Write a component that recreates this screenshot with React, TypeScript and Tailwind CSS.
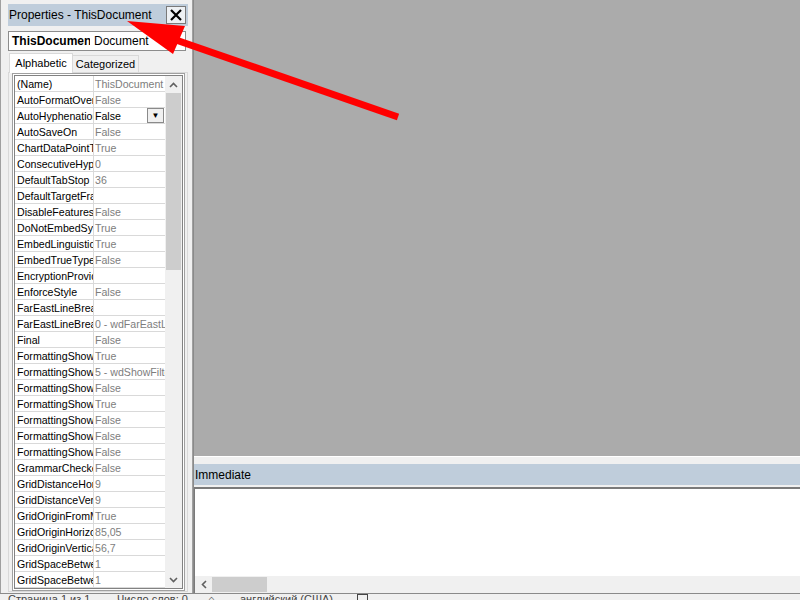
import React from 'react'

const rows: [string, string][] = [
  ['(Name)', 'ThisDocument'],
  ['AutoFormatOverride', 'False'],
  ['AutoHyphenation', 'False'],
  ['AutoSaveOn', 'False'],
  ['ChartDataPointTrack', 'True'],
  ['ConsecutiveHyphensLimit', '0'],
  ['DefaultTabStop', '36'],
  ['DefaultTargetFrame', ''],
  ['DisableFeatures', 'False'],
  ['DoNotEmbedSystemFonts', 'True'],
  ['EmbedLinguisticData', 'True'],
  ['EmbedTrueTypeFonts', 'False'],
  ['EncryptionProvider', ''],
  ['EnforceStyle', 'False'],
  ['FarEastLineBreakLanguage', ''],
  ['FarEastLineBreakLevel', '0 - wdFarEastLineBreakLevelNormal'],
  ['Final', 'False'],
  ['FormattingShowClear', 'True'],
  ['FormattingShowFilter', '5 - wdShowFilterFormattingInUse'],
  ['FormattingShowFont', 'False'],
  ['FormattingShowNextLevel', 'True'],
  ['FormattingShowNumbering', 'False'],
  ['FormattingShowParagraph', 'False'],
  ['FormattingShowUserStyleName', 'False'],
  ['GrammarChecked', 'False'],
  ['GridDistanceHorizontal', '9'],
  ['GridDistanceVertical', '9'],
  ['GridOriginFromMargin', 'True'],
  ['GridOriginHorizontal', '85,05'],
  ['GridOriginVertical', '56,7'],
  ['GridSpaceBetweenHorizontalLines', '1'],
  ['GridSpaceBetweenVerticalLines', '1'],
]

function Chevron({ up }: { up?: boolean }) {
  return (
    <svg width="9" height="6" viewBox="0 0 9 6">
      <path
        d={up ? 'M1 5 L4.5 1.5 L8 5' : 'M1 1 L4.5 4.5 L8 1'}
        fill="none"
        stroke="#606060"
        strokeWidth="1.6"
      />
    </svg>
  )
}

function PropertyRow({ name, value, selected }: { name: string; value: string; selected?: boolean }) {
  return (
    <div className="flex h-[16px] border-b border-[#d9d9d9]">
      <div className="w-[78px] shrink-0 overflow-hidden whitespace-nowrap pl-[2px] leading-[16px] text-black">
        {name}
      </div>
      <div className="w-px shrink-0 bg-[#d9d9d9]" />
      {selected ? (
        <div className="flex flex-1 items-center justify-between overflow-hidden pl-px">
          <span className="leading-[16px] text-black">{value}</span>
          <span className="mr-px flex h-[15px] w-[17px] items-center justify-center border border-[#8a8a8a] bg-[#f0f0f0] text-[8px] text-black">
            ▼
          </span>
        </div>
      ) : (
        <div className="flex-1 overflow-hidden whitespace-nowrap pl-px leading-[16px] text-[#7d7d7d]">
          {value}
        </div>
      )}
    </div>
  )
}

function PropertiesPanel() {
  return (
    <div className="flex h-full w-[193px] shrink-0 flex-col border-l border-r border-[#a0a0a0] bg-[#f0f0f0] pt-[4px]">
      {/* Title bar */}
      <div className="ml-[7px] mr-[4px] flex h-[22px] items-center justify-between bg-[#bfcddb] pl-px">
        <span className="text-[12px] leading-[22px] text-black">Properties - ThisDocument</span>
        <span className="mr-[2px] flex h-[18px] w-[20px] items-center justify-center border border-[#7a7a7a] bg-[#eef1f4]">
          <svg width="12" height="12" viewBox="0 0 12 12">
            <path d="M1 1 L11 11 M11 1 L1 11" stroke="#000" strokeWidth="2.2" />
          </svg>
        </span>
      </div>

      {/* Object combo */}
      <div className="ml-[7px] mr-[6px] mt-[5px] flex h-[20px] items-center border border-[#8c8c8c] bg-white text-[12px]">
        <span className="w-[81px] shrink-0 overflow-hidden whitespace-nowrap pl-[3px] font-bold">ThisDocument</span>
        <span className="flex-1 pl-[4px]">Document</span>
        <span className="pr-[3px]">
          <Chevron />
        </span>
      </div>

      {/* Tabs */}
      <div className="ml-[8px] mt-[2px] flex h-[20px] items-end text-[11px]">
        <div className="z-10 flex h-[20px] w-[64px] items-center justify-center border border-b-0 border-[#d9d9d9] bg-white">
          Alphabetic
        </div>
        <div className="flex h-[18px] w-[66px] items-center justify-center border border-b-0 border-l-0 border-[#d9d9d9] bg-[#f0f0f0]">
          Categorized
        </div>
      </div>

      {/* Tab page */}
      <div className="mb-px ml-[7px] mr-[4px] -mt-px flex flex-1 flex-col border border-[#d9d9d9] bg-[#f0f0f0] pl-[3px] pr-[2px]">
        <div className="flex flex-col border border-[#a0a0a0] bg-white p-px">
          <div className="flex border border-[#828282] bg-white text-[10.6px]">
            <div className="flex w-[150px] flex-col">
              {rows.map(([name, value], i) => (
                <PropertyRow key={i} name={name} value={value} selected={i === 2} />
              ))}
            </div>
            <div className="flex w-[17px] flex-col bg-[#f0f0f0]">
              <div className="flex h-[17px] items-center justify-center">
                <Chevron up />
              </div>
              <div className="mx-[1px] h-[177px] bg-[#cdcdcd]" />
              <div className="flex-1" />
              <div className="flex h-[17px] items-center justify-center">
                <Chevron />
              </div>
            </div>
          </div>
        </div>
      </div>
    </div>
  )
}

function Workspace() {
  return (
    <div className="flex h-full flex-1 flex-col border-l border-[#8a8a8a]">
      <div className="h-[456px] bg-[#ababab]" />
      <div className="h-[8px] border-t border-white bg-[#f0f0f0]" />
      <div className="flex h-[21px] items-center bg-[#bfcddb] pl-px text-[12px] text-black">Immediate</div>
      <div className="h-[2px] bg-[#f0f0f0]" />
      <div className="flex flex-1 flex-col border-t-2 border-l border-[#7a7a7a] bg-white">
        <div className="flex-1" />
        <div className="flex h-[17px] items-center bg-[#f0f0f0]">
          <span className="flex w-[17px] items-center justify-center">
            <svg width="6" height="9" viewBox="0 0 6 9">
              <path d="M5 1 L1.5 4.5 L5 8" fill="none" stroke="#606060" strokeWidth="1.6" />
            </svg>
          </span>
          <span className="h-[15px] w-[55px] bg-[#cdcdcd]" />
        </div>
      </div>
    </div>
  )
}

function StatusBar() {
  return (
    <div className="h-[7px] overflow-hidden border-t border-[#8a8a8a] bg-[#f0f0f0] text-[11px] text-[#444]">
      <div className="-mt-[3px] flex items-center whitespace-nowrap leading-[16px]">
        <span className="ml-[8px] w-[109px]">Страница 1 из 1</span>
        <span className="w-[91px]">Число слов: 0</span>
        <span className="w-[32px]">⌂</span>
        <span className="w-[117px]">английский (США)</span>
        <span className="inline-block h-[10px] w-[11px] border border-[#444]" />
      </div>
    </div>
  )
}

export default function App() {
  return (
    <div
      className="relative h-[600px] w-[800px] overflow-hidden bg-[#f0f0f0]"
      style={{ fontFamily: '"Liberation Sans", Arial, sans-serif' }}
    >
      <div className="flex h-[593px]">
        <PropertiesPanel />
        <Workspace />
      </div>
      <StatusBar />

      {/* Red annotation arrow */}
      <svg className="pointer-events-none absolute left-0 top-0" width="800" height="600" viewBox="0 0 800 600">
        <line x1="176" y1="40" x2="398" y2="117" stroke="#f00" strokeWidth="7" />
        <polygon points="127,21 185,26 173,54" fill="#f00" />
      </svg>
    </div>
  )
}
